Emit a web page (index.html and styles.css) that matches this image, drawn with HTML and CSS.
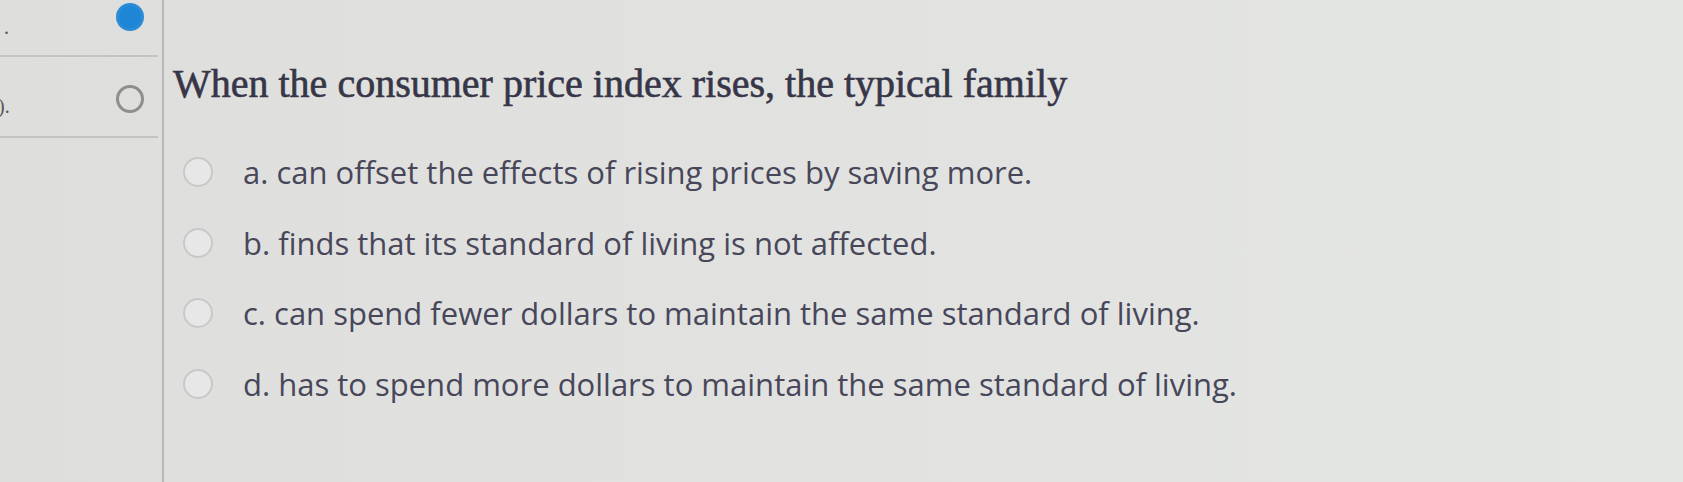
FILE: index.html
```html
<!DOCTYPE html>
<html lang="en">
<head>
<meta charset="utf-8">
<title>Question</title>
<link rel="stylesheet" href="styles.css">
</head>
<body>
<div class="page">
  <nav class="sidebar">
    <div class="nav-item nav-item-first">
      <span class="nav-num">.</span>
      <span class="nav-dot nav-dot-filled"></span>
    </div>
    <div class="nav-item nav-item-second">
      <span class="nav-num">).</span>
      <span class="nav-dot"></span>
    </div>
  </nav>
  <main class="content">
    <h1 class="question">When the consumer price index rises, the typical family</h1>
    <ul class="options">
      <li class="option"><span class="radio"></span><span class="option-text">a. can offset the effects of rising prices by saving more.</span></li>
      <li class="option"><span class="radio"></span><span class="option-text">b. finds that its standard of living is not affected.</span></li>
      <li class="option"><span class="radio"></span><span class="option-text">c. can spend fewer dollars to maintain the same standard of living.</span></li>
      <li class="option"><span class="radio"></span><span class="option-text">d. has to spend more dollars to maintain the same standard of living.</span></li>
    </ul>
  </main>
</div>
</body>
</html>
```

FILE: styles.css
```css
html, body {
  margin: 0;
  padding: 0;
  height: 100%;
}
body {
  background: linear-gradient(90deg, #dedfdd 0%, #e1e2e0 40%, #e4e6e4 100%);
  font-family: "Open Sans", "Liberation Sans", sans-serif;
  overflow: hidden;
}
.page {
  display: flex;
  height: 482px;
}
.sidebar {
  width: 162px;
  flex: 0 0 162px;
  border-right: 2px solid #b9b9b9;
  display: flex;
  flex-direction: column;
}
.nav-item {
  display: flex;
  align-items: center;
  justify-content: space-between;
  padding: 0 14px 0 4px;
  border-bottom: 2px solid #c3c3c3;
  margin-right: 4px;
  box-sizing: border-box;
}
.nav-item-first {
  height: 57px;
  align-items: flex-start;
  padding-top: 3px;
}
.nav-item-second {
  height: 81px;
  padding-top: 5px;
}
.nav-num {
  font-family: "Liberation Serif", serif;
  font-size: 20px;
  color: #555;
  line-height: 1;
}
.nav-item-first .nav-num {
  margin-top: 14px;
}
.nav-item-second .nav-num {
  margin-top: 14px;
  margin-left: -6px;
}
.nav-dot {
  width: 22px;
  height: 22px;
  border-radius: 50%;
  border: 3px solid #8e8e8e;
  background: transparent;
}
.nav-dot-filled {
  background: #1f86d6;
  border-color: #2a8bd6;
}
.content {
  flex: 1;
  padding: 60px 0 0 9px;
}
.question {
  margin: 0;
  font-family: "Liberation Serif", "Times New Roman", serif;
  font-weight: normal;
  font-size: 40px;
  line-height: 48px;
  color: #373648;
  -webkit-text-stroke: 0.6px #373648;
  white-space: nowrap;
}
.options {
  list-style: none;
  margin: 29px 0 0 0;
  padding: 0;
}
.option {
  display: flex;
  align-items: center;
  height: 70.5px;
  padding-left: 10px;
}
.radio {
  width: 26px;
  height: 26px;
  border-radius: 50%;
  border: 2px solid #c8c8c8;
  background: #e6e7e6;
  flex: 0 0 auto;
}
.option-text {
  margin-left: 30px;
  font-size: 31px;
  line-height: 70px;
  color: #48475a;
  white-space: nowrap;
}
```
